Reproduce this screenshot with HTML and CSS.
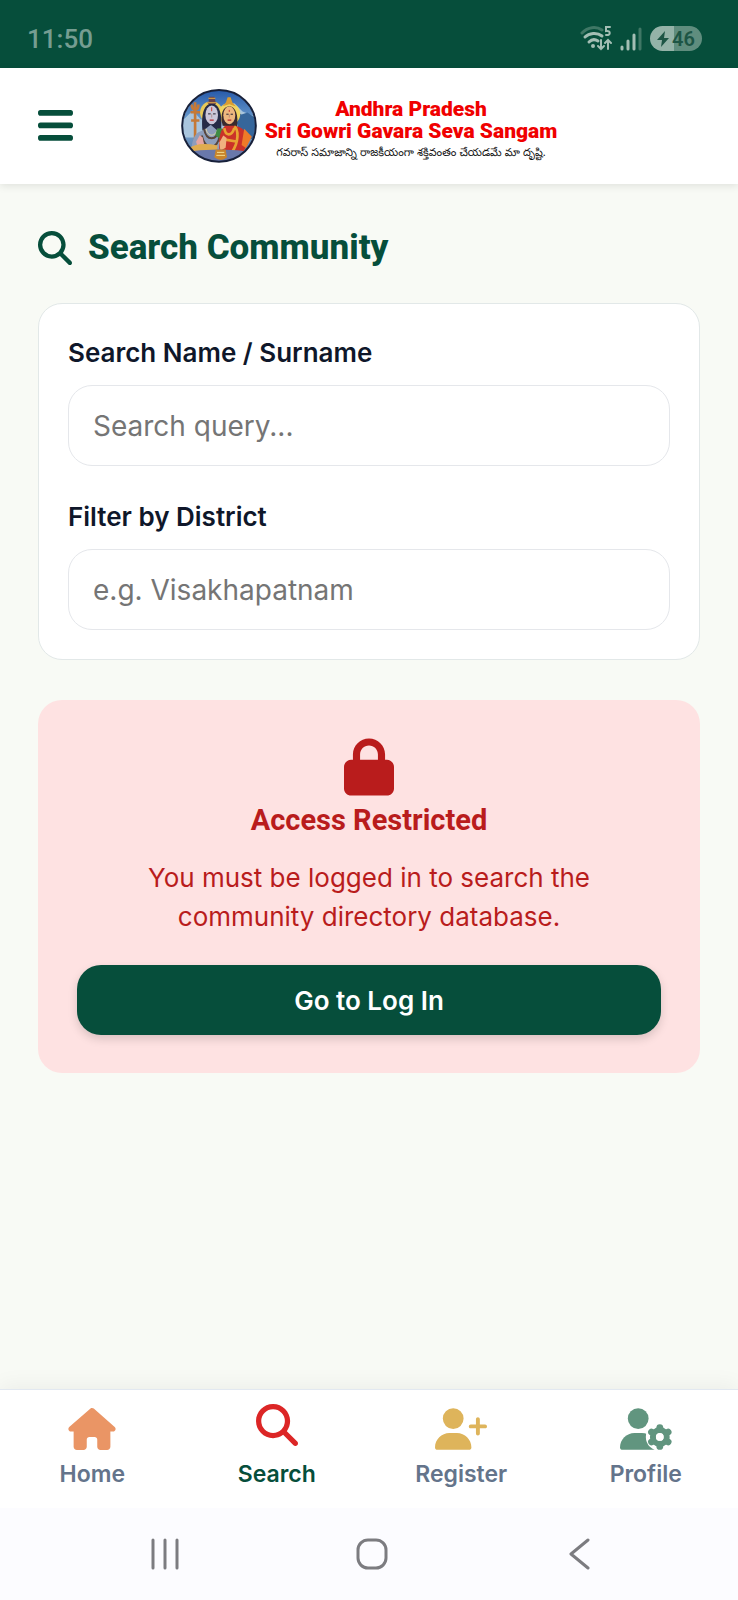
FILE: index.html
```html
<!DOCTYPE html>
<html lang="en">
<head>
    <meta charset="UTF-8">
    <meta name="viewport" content="width=device-width, initial-scale=1.0">
    <title>Search Community</title>
    <link rel="stylesheet" href="styles.css">
</head>
<body>

    <div class="status-bar">
        <span class="time">11:50</span>
        <div class="status-icons">
            <svg class="wifi" width="32" height="26" viewBox="0 0 32 26" fill="none" stroke="#a3beb4" stroke-width="3" stroke-linecap="round">
                <path d="M2 7C8 1 16 0 22 4" stroke="#3f7765"/>
                <path d="M5 11C9 7 17 6 22 10M9 16C12 13 15 13 18 15"/>
                <circle cx="13" cy="20" r="1" stroke-width="2"/>
                <path d="M21 14v9M18 20l3 3 3-3M28 23v-9M25 17l3-3 3 3" stroke-width="2"/>
                <path d="M30 1h-4v4c5-1 5 5 0 4" stroke-width="2"/>
            </svg>
            <svg class="signal" width="22" height="24" viewBox="0 0 22 24" stroke="#a3beb4" stroke-width="3" stroke-linecap="round">
                <path d="M2 20v2M8 14v8M14 8v14"/>
                <path d="M20 2v20" stroke="#3f7765"/>
            </svg>
            <span class="battery">
                <svg width="12" height="16" viewBox="0 0 12 16" fill="#1d5545"><path d="M8 0L0 9h5L4 16l8-9H7z"/></svg>46
            </span>
        </div>
    </div>

    <header>
        <button class="menu-btn" aria-label="Menu">
            <svg width="35" height="40" viewBox="0 0 448 512" fill="currentColor"><path d="M0 88c0-24 10-36 32-36h384c22 0 32 12 32 36s-10 36-32 36H32c-22 0-32-12-32-36zM0 248c0-24 10-36 32-36h384c22 0 32 12 32 36s-10 36-32 36H32c-22 0-32-12-32-36zM0 408c0-24 10-36 32-36h384c22 0 32 12 32 36s-10 36-32 36H32c-22 0-32-12-32-36z"/></svg>
        </button>
        <div class="logo">
            <svg width="76" height="74" viewBox="30 25 228 223">
                <defs>
                    <clipPath id="emblem"><ellipse cx="144" cy="136" rx="109" ry="107"/></clipPath>
                    <linearGradient id="sky" x1="0" y1="0" x2="0" y2="1">
                        <stop offset="0" stop-color="#2457a8"/>
                        <stop offset=".5" stop-color="#78a9d5"/>
                        <stop offset="1" stop-color="#536e9b"/>
                    </linearGradient>
                </defs>
                <g clip-path="url(#emblem)">
                    <rect x="30" y="25" width="228" height="223" fill="url(#sky)"/>
                    <path d="M30 125l35-35 25 28 45-30 55-20 25 25 45 18v60H30z" fill="#a9c5dd"/>
                    <path d="M190 90l22 12 18-6 28 20v60h-50z" fill="#36669b"/>
                    <path d="M72 65v150M62 72c0 20 20 20 20 0M58 95h30M60 120h25" stroke="#c57936" stroke-width="8" fill="none"/>
                    <circle cx="121" cy="96" r="34" fill="#e8c957"/>
                    <circle cx="175" cy="100" r="33" fill="#f0d460"/>
                    <!-- left figure -->
                    <path d="M94 150C89 95 101 70 123 68c23 2 32 36 27 82z" fill="#262a46"/>
                    <path d="M111 70l4-22h15l5 22z" fill="#69414a"/>
                    <path d="M112 53h21M108 66h29" stroke="#c89748" stroke-width="4"/>
                    <ellipse cx="122" cy="103" rx="19" ry="28" fill="#cbc6d8"/>
                    <path d="M60 215c3-39 10-61 38-66l21-16 19 16c19 6 23 25 23 66z" fill="#8e9dbb"/>
                    <path d="M99 145c7 38 39 38 44 0M92 165c12 49 49 42 54 0" fill="none" stroke="#59463c" stroke-width="6"/>
                    <path d="M105 145c4 24 28 27 35 0" fill="none" stroke="#e2d8a3" stroke-width="3"/>
                    <path d="M138 145q20-6 25 14l-14 18-16-12z" fill="#3e8b43"/>
                    <path d="M75 184l11-20 9 7 5 27-17 14z" fill="#e5a5a1"/>
                    <path d="M52 205q25-22 88-10l-5 28H65z" fill="#dfac50"/>
                    <!-- right figure -->
                    <path d="M155 136c-9-36 1-57 20-60 20 3 28 28 23 63z" fill="#3b2a2d"/>
                    <path d="M155 77l10-12 5-15h9l5 15 11 13-20-7z" fill="#d99c32"/>
                    <ellipse cx="175" cy="104" rx="18" ry="27" fill="#eeb77f"/>
                    <path d="M162 136h27c27 2 42 20 42 55l-18 30h-66c-5-28-5-68 15-85z" fill="#cb3229"/>
                    <path d="M190 138c13 8 15 47-8 79M160 143c3 24 22 26 30 0M154 176l46 8" fill="none" stroke="#e8a332" stroke-width="8"/>
                    <path d="M220 145l23 24-18 34-13-9z" fill="#ee7b28"/>
                    <path d="M145 186l12-21 10 8-3 29-16 9z" fill="#f0b17f"/>
                    <!-- faces -->
                    <path d="M111 100h8M126 100h8M166 101h7M179 101h7" stroke="#292633" stroke-width="3"/>
                    <path d="M122 101v10M175 102v9" stroke="#a47770" stroke-width="2"/>
                    <path d="M116 119h12M170 119h11" stroke="#b92a31" stroke-width="4"/>
                    <path d="M122 80v12M175 88v6" stroke="#ce3a31" stroke-width="3"/>
                    <path d="M30 216q110-18 228 0v32H30z" fill="#6978ab"/>
                    <path d="M134 207h30l4 24q-18 16-38 0z" fill="#c9852c"/>
                    <path d="M138 216h22M136 225h26" stroke="#f4df91" stroke-width="3"/>
                </g>
                <ellipse cx="144" cy="136" rx="111" ry="108" fill="none" stroke="#17203a" stroke-width="6"/>
            </svg>
            <div class="logo-text">
                <strong>Andhra Pradesh</strong>
                <strong>Sri Gowri Gavara Seva Sangam</strong>
                <span lang="te">గవరాస్ సమాజాన్ని రాజకీయంగా శక్తివంతం చేయడమే మా దృష్టి.</span>
            </div>
        </div>
    </header>

    <main>
        <h1>
            <svg width="34" height="34" viewBox="0 0 512 512" fill="currentColor"><path d="M416 208c0 45.9-14.9 88.3-40 122.7L502.6 457.4c12.5 12.5 12.5 32.8 0 45.3s-32.8 12.5-45.3 0L330.7 376c-34.4 25.2-76.8 40-122.7 40C93.1 416 0 322.9 0 208S93.1 0 208 0s208 93.1 208 208zM208 352a144 144 0 1 0 0-288 144 144 0 1 0 0 288z"/></svg>
            Search Community
        </h1>

        <form class="search-card">
            <div class="field">
                <label for="nameInput">Search Name / Surname</label>
                <input type="text" id="nameInput" placeholder="Search query...">
            </div>
            <div class="field">
                <label for="districtInput">Filter by District</label>
                <input type="text" id="districtInput" placeholder="e.g. Visakhapatnam">
            </div>
        </form>

        <section class="restricted">
            <svg width="50" height="58" viewBox="0 0 448 512" fill="currentColor"><path d="M144 144v48h160v-48c0-44.2-35.8-80-80-80s-80 35.8-80 80zM80 192v-48C80 64.5 144.5 0 224 0s144 64.5 144 144v48h16c35.3 0 64 28.7 64 64v192c0 35.3-28.7 64-64 64H64c-35.3 0-64-28.7-64-64V256c0-35.3 28.7-64 64-64h16z"/></svg>
            <h2>Access Restricted</h2>
            <p>You must be logged in to search the community directory database.</p>
            <button class="login-btn">Go to Log In</button>
        </section>
    </main>

    <nav class="bottom-nav">
        <a href="#" class="home">
            <svg width="48" height="42" viewBox="0 0 576 512" fill="currentColor"><path d="M575.8 255.5c0 18-15 32.1-32 32.1h-32l.7 160.2c0 2.7-.2 5.4-.5 8.1V472c0 22.1-17.9 40-40 40h-80c-22.1 0-40-17.9-40-40v-88c0-17.7-14.3-32-32-32h-64c-17.7 0-32 14.3-32 32v88c0 22.1-17.9 40-40 40h-80c-22.1 0-40-17.9-40-40V287.6H32c-18 0-32-14-32-32.1 0-9 3-17 10-24L266.4 8c7-7 15-8 22-8s15 2 21 7l255.4 224.5c8 7 12 15 11 24z"/></svg>
            <span>Home</span>
        </a>
        <a href="#" class="search active">
            <svg width="42" height="42" viewBox="0 0 512 512" fill="currentColor"><path d="M416 208c0 45.9-14.9 88.3-40 122.7L502.6 457.4c12.5 12.5 12.5 32.8 0 45.3s-32.8 12.5-45.3 0L330.7 376c-34.4 25.2-76.8 40-122.7 40C93.1 416 0 322.9 0 208S93.1 0 208 0s208 93.1 208 208zM208 352a144 144 0 1 0 0-288 144 144 0 1 0 0 288z"/></svg>
            <span>Search</span>
        </a>
        <a href="#" class="register">
            <svg width="52" height="42" viewBox="0 0 640 512" fill="currentColor"><path d="M96 128a128 128 0 1 1 256 0 128 128 0 1 1-256 0zM0 482.3C0 383.8 79.8 304 178.3 304h91.4c98.5 0 178.3 79.8 178.3 178.3 0 16.4-13.3 29.7-29.7 29.7H29.7C13.3 512 0 498.7 0 482.3zM504 312v-64h-64c-13.3 0-24-10.7-24-24s10.7-24 24-24h64v-64c0-13.3 10.7-24 24-24s24 10.7 24 24v64h64c13.3 0 24 10.7 24 24s-10.7 24-24 24h-64v64c0 13.3-10.7 24-24 24s-24-10.7-24-24z"/></svg>
            <span>Register</span>
        </a>
        <a href="#" class="profile">
            <svg width="52" height="42" viewBox="0 0 640 512" fill="currentColor">
                <path d="M0 482.3C0 383.8 79.8 304 178.3 304h91.4c98.5 0 178.3 79.8 178.3 178.3 0 16.4-13.3 29.7-29.7 29.7H29.7C13.3 512 0 498.7 0 482.3z"/>
                <circle cx="490" cy="354" r="172" fill="#fff"/>
                <circle cx="490" cy="354" r="84" fill="none" stroke="currentColor" stroke-width="76"/>
                <path d="M490 254v-16M490 454v16M576 304l16-10M576 404l16 10M404 304l-16-10M404 404l-16 10" stroke="currentColor" stroke-width="84" stroke-linecap="round"/>
                <circle cx="490" cy="354" r="48" fill="#fff"/>
                <circle cx="224" cy="128" r="128"/>
            </svg>
            <span>Profile</span>
        </a>
    </nav>

    <div class="system-nav">
        <button aria-label="Recent apps"><svg width="32" height="32" viewBox="0 0 32 32"><path d="M4 2v28M16 2v28M28 2v28"/></svg></button>
        <button aria-label="Home screen"><svg width="32" height="32" viewBox="0 0 32 32"><rect x="2" y="2" width="28" height="28" rx="10"/></svg></button>
        <button aria-label="Back"><svg width="32" height="32" viewBox="0 0 32 32"><path d="M25 2L8 16l17 14"/></svg></button>
    </div>

</body>
</html>
```
FILE: styles.css
```css
* {
    box-sizing: border-box;
}

body {
    font-family: Inter, "Liberation Sans", sans-serif;
    background-color: #f8faf5;
    color: #0f172a;
    margin: 0;
    min-height: 100vh;
    display: flex;
    flex-direction: column;
}

button {
    font-family: inherit;
    border: none;
    cursor: pointer;
}

svg {
    display: block;
    flex-shrink: 0;
}

.status-bar {
    height: 68px;
    padding: 9px 36px 0 27px;
    background-color: #064e3b;
    display: flex;
    align-items: center;
    justify-content: space-between;
}

.time {
    font-family: Roboto, sans-serif;
    font-size: 26px;
    font-weight: 500;
    color: #759d91;
}

.status-icons {
    display: flex;
    align-items: center;
    gap: 8px;
}

.battery {
    display: flex;
    align-items: center;
    justify-content: center;
    gap: 3px;
    width: 52px;
    height: 25px;
    border-radius: 13px;
    background: linear-gradient(to right, #94b3a8 46%, #5f8d7e 46%);
    color: #1d5545;
    font-family: Roboto, sans-serif;
    font-size: 20px;
    font-weight: 600;
}

header {
    display: grid;
    grid-template-columns: 1fr auto 1fr;
    align-items: center;
    height: 116px;
    padding: 0 38px;
    background-color: #fff;
    box-shadow: 0 2px 8px rgba(0, 0, 0, 0.1);
}

.menu-btn {
    justify-self: start;
    padding: 0;
    background: none;
    color: #064e3b;
}

.logo {
    display: flex;
    align-items: center;
    gap: 8px;
}

.logo-text {
    display: flex;
    flex-direction: column;
    align-items: center;
    width: 292px;
    padding-top: 12px;
    white-space: nowrap;
}

.logo-text strong {
    font-family: Roboto, sans-serif;
    font-size: 21px;
    font-weight: 900;
    line-height: 22px;
    color: #f00000;
}

.logo-text span {
    font-family: "Noto Sans Telugu", "Noto Sans", sans-serif;
    font-size: 11px;
    line-height: 24px;
    color: #111;
}

main {
    flex: 1;
    padding: 38px;
}

h1,
h2 {
    font-family: Roboto, sans-serif;
    margin: 0;
}

h1 {
    display: flex;
    align-items: center;
    gap: 16px;
    margin-bottom: 30px;
    font-size: 35px;
    font-weight: 800;
    line-height: 51px;
    color: #064e3b;
}

.search-card {
    display: flex;
    flex-direction: column;
    gap: 31px;
    padding: 29px;
    background-color: #fff;
    border: 1px solid #e2e8e8;
    border-radius: 24px;
}

.field {
    display: flex;
    flex-direction: column;
    gap: 12px;
}

.field label {
    font-size: 26px;
    font-weight: 600;
    line-height: 40px;
}

.field input {
    width: 100%;
    height: 81px;
    padding: 0 24px;
    border: 1px solid #e5e7eb;
    border-radius: 24px;
    background-color: #fff;
    font-family: inherit;
    font-size: 28px;
}

.field input::placeholder {
    color: #757575;
}

.restricted {
    display: flex;
    flex-direction: column;
    align-items: center;
    margin-top: 40px;
    padding: 38px 39px;
    border-radius: 24px;
    background-color: #fee2e2;
    color: #b91c1c;
    text-align: center;
}

.restricted h2 {
    font-size: 29px;
    font-weight: 700;
    line-height: 48px;
}

.restricted p {
    max-width: 480px;
    margin: 14px 0 29px;
    font-size: 26px;
    line-height: 39px;
}

.login-btn {
    width: 100%;
    height: 70px;
    border-radius: 24px;
    background-color: #064e3b;
    color: #fff;
    font-size: 26px;
    font-weight: 600;
    box-shadow: 0 4px 10px rgba(0, 0, 0, 0.15);
}

.bottom-nav {
    display: grid;
    grid-template-columns: repeat(4, 1fr);
    height: 119px;
    padding-top: 18px;
    background-color: #fff;
    border-top: 1px solid #e2e8f0;
    box-shadow: 0 -4px 20px rgba(0, 0, 0, 0.05);
}

.bottom-nav a {
    display: flex;
    flex-direction: column;
    align-items: center;
    gap: 8px;
    color: #64748b;
    font-size: 23px;
    font-weight: 600;
    line-height: 32px;
    text-decoration: none;
}

.bottom-nav .active {
    color: #064e3b;
}

.home svg {
    color: #ea9565;
}

.search svg {
    color: #dc2626;
}

.register svg {
    color: #deb45b;
}

.profile svg {
    color: #61957f;
}

.bottom-nav .active svg {
    transform: translateY(-4px);
}

.system-nav {
    display: grid;
    grid-template-columns: repeat(3, 1fr);
    height: 92px;
    padding: 0 55px 0 61px;
    background-color: #fcfcff;
}

.system-nav button {
    display: flex;
    align-items: center;
    justify-content: center;
    padding: 0;
    background: none;
}

.system-nav svg {
    fill: none;
    stroke: #7c7c80;
    stroke-width: 3;
    stroke-linecap: round;
    stroke-linejoin: round;
}
```
